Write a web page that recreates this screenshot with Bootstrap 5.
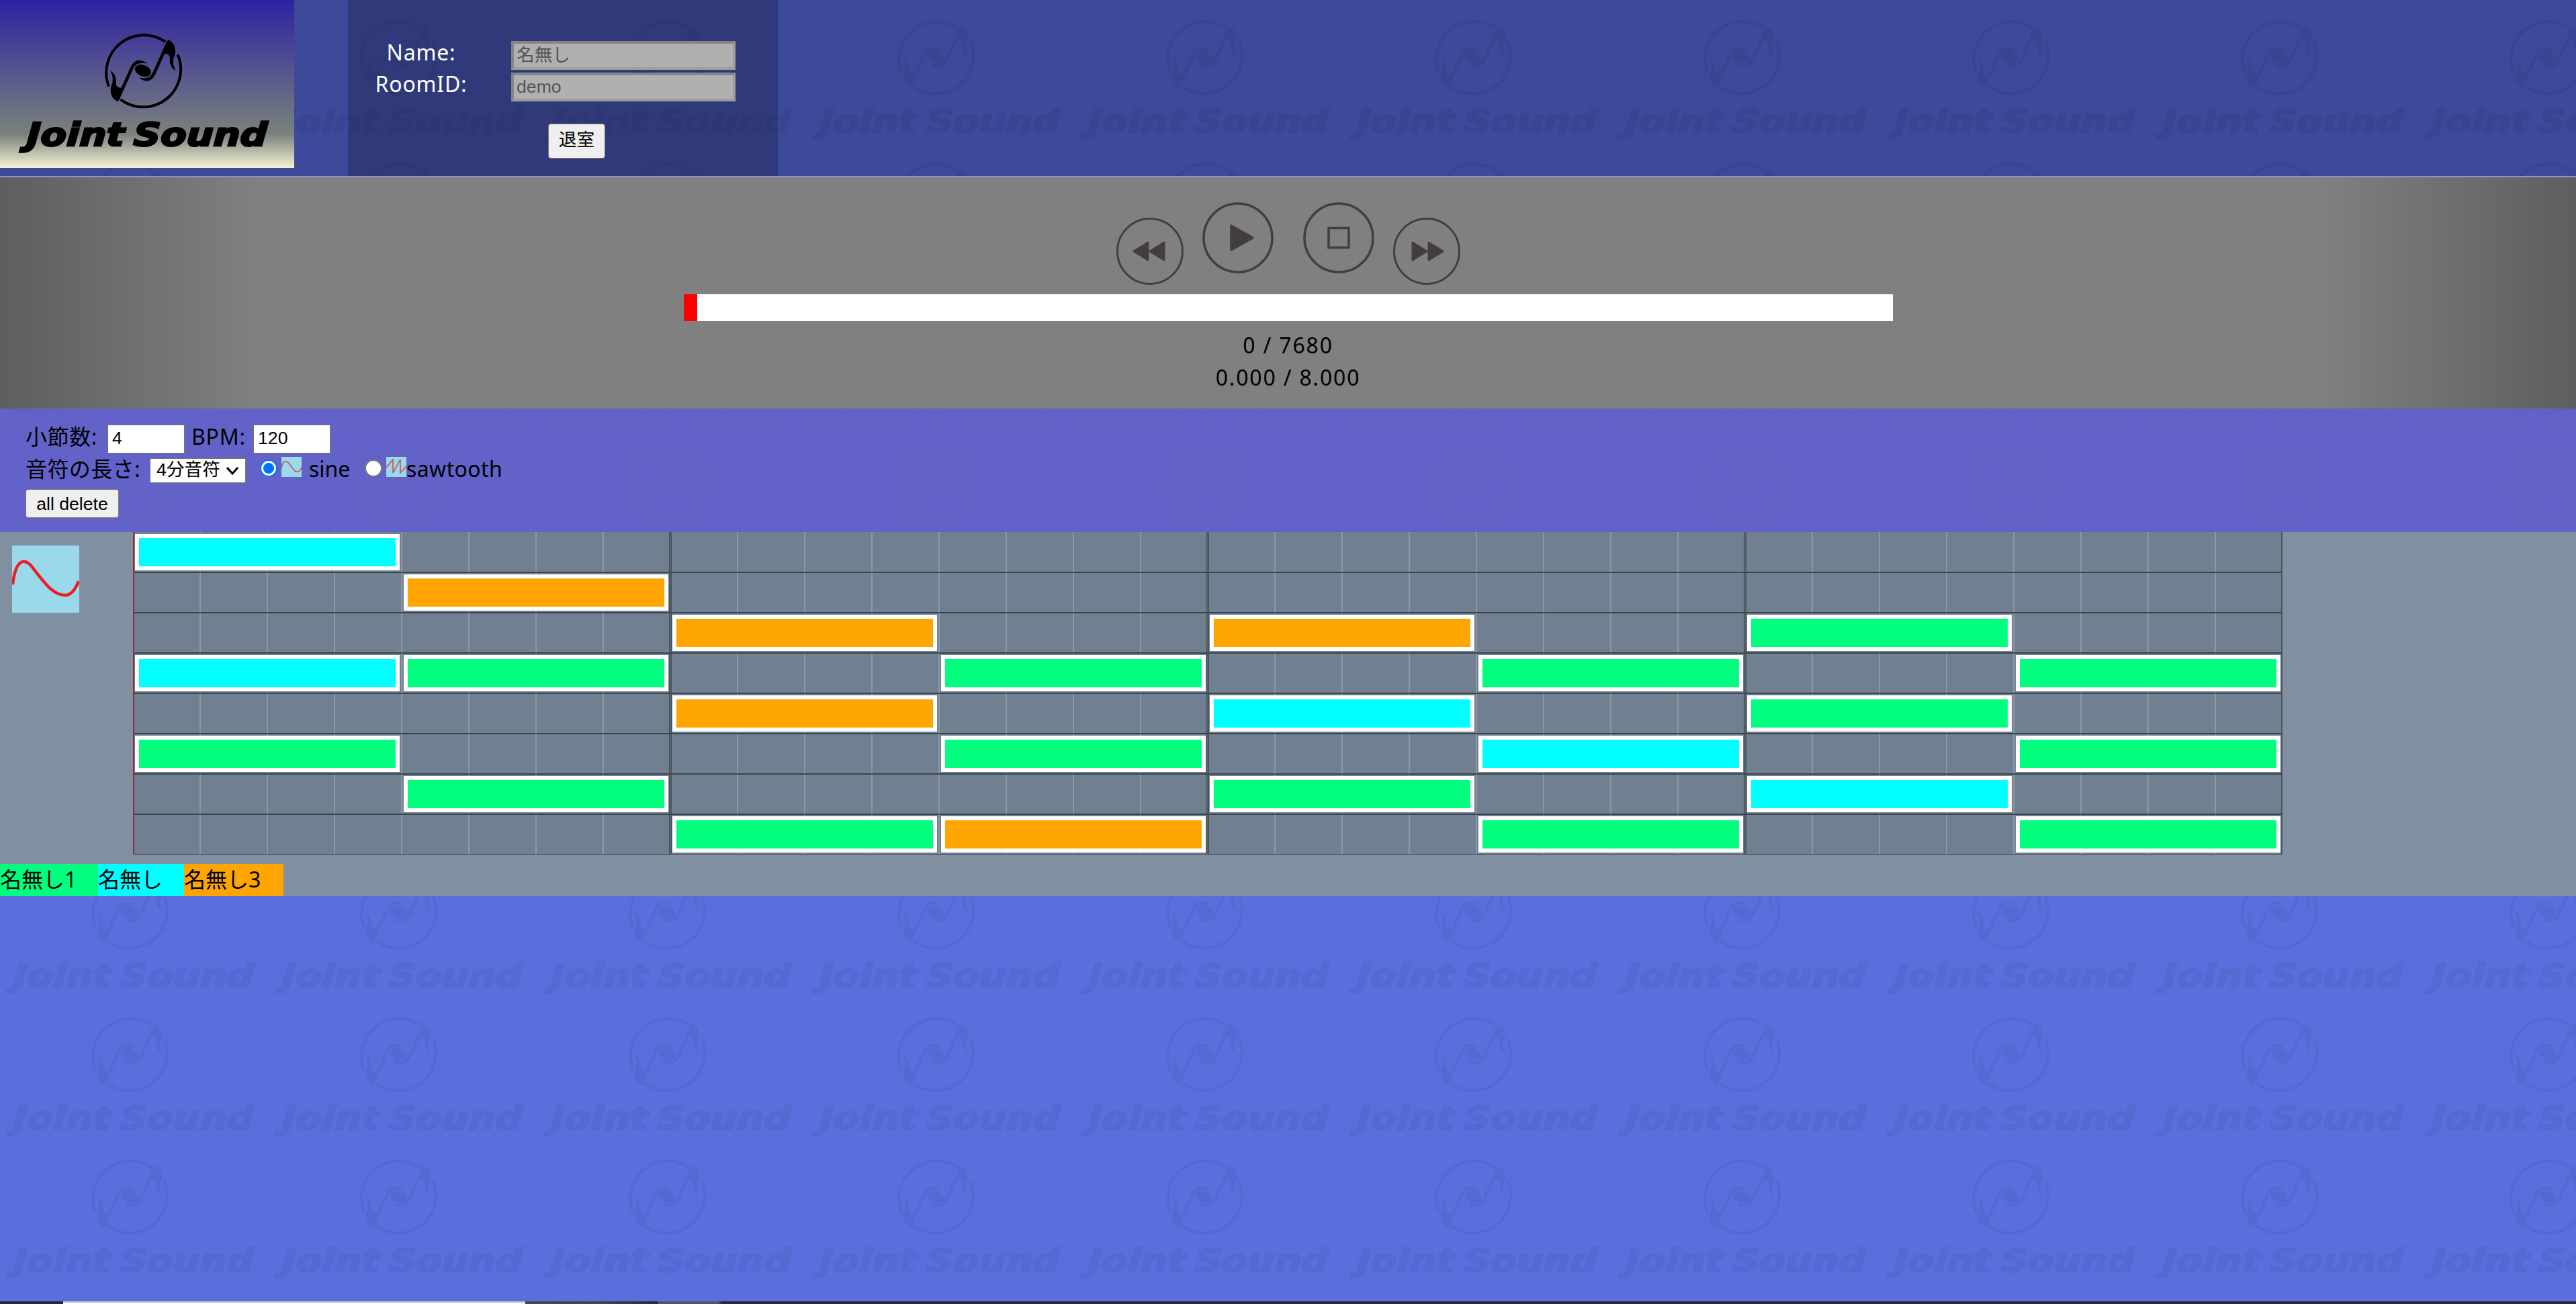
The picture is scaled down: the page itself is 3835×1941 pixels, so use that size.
<!DOCTYPE html>
<html lang="ja">
<head>
<meta charset="utf-8">
<title>Joint Sound</title>
<link href="https://cdn.jsdelivr.net/npm/bootstrap@5.3.0/dist/css/bootstrap.min.css" rel="stylesheet">
<style>
  body { font: 32px/48px "Noto Sans", "Noto Sans CJK JP", sans-serif; color: #000; background-color: #5b6edd; height: 1941px; overflow: hidden;
    background-image: url("data:image/svg+xml,%3Csvg xmlns='http://www.w3.org/2000/svg' width='400' height='212' opacity='.05'%3E%3Cg transform='translate(129.500 19.500) scale(.33333)'%3E%3Cg fill='none' stroke='%23000' stroke-width='13'%3E%3Cpath d='M38 268A168 168 0 0 1 290 68M345 125A168 168 0 0 1 90 326'/%3E%3Cpath d='M76 328L138 190Q152 158 174 158Q192 156 206 166'/%3E%3Cpath d='M304 66L242 204Q228 236 206 236Q188 238 174 228'/%3E%3C/g%3E%3Cellipse cx='190' cy='197' rx='39' ry='26' transform='rotate(20 190 197)'/%3E%3Cpath d='M44 198Q74 212 70 258Q76 276 94 272L78 336Q46 320 45 284Q46 266 54 250Q58 222 44 198Z'/%3E%3Cpath transform='rotate(180 190 197)' d='M44 198Q74 212 70 258Q76 276 94 272L78 336Q46 320 45 284Q46 266 54 250Q58 222 44 198Z'/%3E%3C/g%3E%3Ctext transform='translate(19 197) skewX(-3)' font-family='DejaVu Sans' font-weight='bold' font-style='oblique' font-size='48' word-spacing='-5' textLength='358' lengthAdjust='spacingAndGlyphs' stroke='%23000' stroke-width='2.500'%3EJoint Sound%3C/text%3E%3C/svg%3E"); }
  .site-head { height: 264px; background: rgba(0,0,15,.33); border-bottom: 2px solid #9690bf; gap: 80px; }
  .brand-box { width: 438px; height: 250px; padding: 20px 18px 18px 20px; background: linear-gradient(#2e22a2, #7a827c 80%, #f5f1d4); }
  .login-box { width: 640px; padding: 54px 63px 0 0; background: rgba(0,0,0,.2); color: #fff; }
  .login-label { width: 218px; text-align: center; margin-right: 25px; letter-spacing: .8px; }
  .login-row { height: 47px; }
  .f-sm { font: 26.67px/30px "Liberation Sans", "Noto Sans CJK JP", sans-serif; }
  .login-field { width: 334px; height: 43px; margin-top: 7px; padding: 2px 4px; border: 4px solid; border-color: #858585 #9d9d9d #9d9d9d #858585; background: #b0b0b0; color: #545454; }
  .plain-btn { background: #efefef; color: #000; border: 1.5px solid #767676; border-radius: 4px; padding: 0; text-align: center; }
  .leave { width: 85px; height: 52px; margin: 36px 0 0 298px; padding-bottom: 4px; }
  .player { height: 344px; background: linear-gradient(90deg, #5e5e5e, #808080 10%, #808080 90%, #5e5e5e); }
  .transport { height: 174px; padding-top: 37px; }
  .skip-icon { margin-top: 23px; }
  .near { margin-right: 28px; }
  .mid { margin-right: 44px; }
  .bar { width: 1800px; height: 40px; margin-bottom: 12px; background: #fff; }
  .bar-pos { width: 20px; background: #f00; }
  .count { letter-spacing: 1.8px; }
  .controls { height: 184px; padding: 18px 38px; background: rgba(100,96,196,.85); }
  .line { height: 48px; }
  .num { width: 115px; height: 43px; margin: 6px 0 0 0; padding: 4px 6px; background: #fff; border: 1.5px solid #767676; }
  .pick { width: 143px; height: 37px; margin: 8px 21px 0 14px; padding: 2px 9px; line-height: 28px; background: #fff; border: 1.5px solid #767676; }
  .dot { width: 26px; height: 26px; margin-top: 10px; border-radius: 50%; background: #fff; border: 2px solid #767676; }
  .dot.on { border-color: #0075ff; background: radial-gradient(circle, #0075ff 7.5px, #fff 8.5px); }
  .wipe { width: 139px; height: 43px; margin-top: 6px; line-height: 38px; }
  .bars-label { width: 122px; letter-spacing: .6px; }
  .len-label { width: 171px; letter-spacing: .4px; white-space: nowrap; }
  .bpm { width: 102px; padding-left: 10px; letter-spacing: .8px; }
  .wave { margin: 6px 0 0 6px; }
  .sine { width: 94px; padding-left: 11px; }
  .saw { letter-spacing: .4px; }
  .roll { background: #8190a0; height: 542px; }
  .roll-side { width: 198px; padding: 20px 0 0 18px; }
  .sheet { width: 3200px; height: 480px; position: relative; background: #708090; }
  .track { height: 60px; display: grid; grid-template-columns: repeat(8, 400px); }
  .note { height: 54px; margin: 3px; border: 6px solid #fff; z-index: 1; }
  .rules { position: absolute; inset: 0 auto auto 0; }
  .g { background: #00ff7f; } .c { background: #0ff; } .o { background: orange; }
  .c1 { grid-column: 1 } .c2 { grid-column: 2 } .c3 { grid-column: 3 } .c4 { grid-column: 4 }
  .c5 { grid-column: 5 } .c6 { grid-column: 6 } .c7 { grid-column: 7 } .c8 { grid-column: 8 }
  .people { margin-top: 14px; height: 48px; line-height: 45px; }
  .strip { height: 4px; background: linear-gradient(90deg, #2a2a36 94px, #fff 94px, #fff 782px, #484848 782px, #444 900px, #262c3a 980px, #555766 980px, #555766 1068px, #272c38 1076px); }
  .strip-top { width: 688px; height: 2px; margin-left: 94px; background: #c2c2c6; }
</style>
<script src="https://cdn.jsdelivr.net/npm/bootstrap@5.3.0/dist/js/bootstrap.bundle.min.js"></script>
</head>
<body class="d-flex flex-column">
<header class="site-head d-flex flex-shrink-0">
  <div class="brand-box">
    <svg class="d-block" width="400" height="212">
      <g transform="translate(129.500 19.500) scale(.33333)">
        <g fill="none" stroke="#000" stroke-width="12">
          <path d="M38 268A168 168 0 0 1 290 68M345 125A168 168 0 0 1 90 326"/>
          <path stroke-width="14" d="M76 328L138 190Q152 158 174 158M304 66L242 204Q228 236 206 236"/>
        </g>
        <ellipse cx="190" cy="197" rx="37" ry="25" transform="rotate(22 190 197)"/>
        <path id="flag" d="M44 198Q74 212 70 258Q76 276 94 272L78 336Q46 320 45 284Q46 266 54 250Q58 222 44 198ZM165 151Q192 150 208 166Q188 160 170 165Z"/>
        <use href="#flag" transform="rotate(180 190 197)"/>
      </g>
      <text transform="translate(19 197) skewX(-3)" font-family="DejaVu Sans" font-weight="bold" font-style="oblique" font-size="48" word-spacing="-5" textLength="358" lengthAdjust="spacingAndGlyphs" stroke="#000" stroke-width="2.500">Joint Sound</text>
    </svg>
  </div>
  <div class="login-box">
    <div class="login-row d-flex"><span class="login-label">Name:</span><div class="login-field f-sm">名無し</div></div>
    <div class="login-row d-flex"><span class="login-label">RoomID:</span><div class="login-field f-sm">demo</div></div>
    <button class="plain-btn leave f-sm d-block">退室</button>
  </div>
</header>

<section class="player flex-shrink-0 d-flex flex-column align-items-center">
  <div class="transport d-flex">
    <svg class="skip-icon near" width="100" height="100" fill="none" stroke="#433e3d" stroke-width="3"><circle cx="50" cy="50" r="48.5"/><path d="M26 50L47 37V63ZM50 50L71 37V63Z" fill="#433e3d" stroke-linejoin="round"/></svg>
    <svg class="mid" width="106" height="106" fill="none" stroke="#433e3d" stroke-width="3.500"><circle cx="53" cy="53" r="51"/><path d="M43 35L75 53L43 71Z" fill="#433e3d" stroke-linejoin="round"/></svg>
    <svg class="near" width="106" height="106" fill="none" stroke="#433e3d" stroke-width="3.500"><circle cx="53" cy="53" r="51"/><rect x="38" y="38.500" width="30" height="29"/></svg>
    <svg class="skip-icon" width="100" height="100" fill="none" stroke="#433e3d" stroke-width="3"><circle cx="50" cy="50" r="48.5"/><path d="M74 50L53 37V63ZM50 50L29 37V63Z" fill="#433e3d" stroke-linejoin="round"/></svg>
  </div>
  <div class="bar d-flex"><div class="bar-pos"></div></div>
  <div class="count">0 / 7680</div>
  <div class="count">0.000 / 8.000</div>
</section>

<section class="controls flex-shrink-0">
  <div class="line d-flex"><span class="bars-label">小節数:</span><div class="num f-sm">4</div><span class="bpm">BPM:</span><div class="num f-sm">120</div></div>
  <div class="line d-flex"><span class="len-label">音符の長さ:</span>
    <div class="pick f-sm d-flex justify-content-between">4分音符<svg width="20" height="30" fill="none" stroke="#000" stroke-width="3"><path d="M2 11L10 20L18 11"/></svg></div>
    <span class="dot on"></span>
    <svg class="wave" width="30" height="30"><rect width="30" height="30" fill="#9ad9ea"/><path d="M0 17C2 4 8 5 12 11C17 17 20 24 25 22Q28 21 30 16" fill="none" stroke="#d8404c" stroke-width="1.5"/></svg>
    <span class="sine">sine</span><span class="dot"></span>
    <svg class="wave" width="30" height="30"><rect width="30" height="30" fill="#9ad9ea"/><path d="M0 16L10 4V24L21 4V24L30 14" fill="none" stroke="#d8404c" stroke-width="1.5"/></svg>
    <span class="saw">sawtooth</span>
  </div>
  <button class="plain-btn wipe f-sm d-block">all delete</button>
</section>

<section class="roll flex-shrink-0">
  <div class="d-flex">
    <div class="roll-side"><svg class="d-block" width="100" height="100"><rect width="100" height="100" fill="#9ad9ea"/><path d="M1 58C5 22 18 14 33 36C50 58 62 74 79 74Q91 74 99 53" fill="none" stroke="#ed1c24" stroke-width="4.500"/></svg></div>
    <div class="sheet">
      <svg class="rules" width="3200" height="480">
        <defs>
          <pattern id="cells" width="100" height="60" patternUnits="userSpaceOnUse"><path d="M.500 0V60M99.500 0V60" stroke="#8b98a7"/></pattern>
          <pattern id="rows" width="100" height="60" patternUnits="userSpaceOnUse"><path d="M0 .500H100M0 59.500H100" stroke="#3a464e"/></pattern>
        </defs>
        <rect width="3200" height="480" fill="url(#cells)"/>
        <path d="M800 0V480M1600 0V480M2400 0V480" stroke="#444e56" stroke-width="4"/>
        <path d="M800 0V480M1600 0V480M2400 0V480" stroke="#59626a" stroke-width="2"/>
        <path d="M3199 0V480" stroke="#4b555d" stroke-width="2"/>
        <rect y="1" width="3200" height="479" fill="url(#rows)"/>
        <path d="M1 0V480" stroke="#8d303c" stroke-width="2"/>
      </svg>
      <div class="track"><div class="note c c1"></div></div>
      <div class="track"><div class="note o c2"></div></div>
      <div class="track"><div class="note o c3"></div><div class="note o c5"></div><div class="note g c7"></div></div>
      <div class="track"><div class="note c c1"></div><div class="note g c2"></div><div class="note g c4"></div><div class="note g c6"></div><div class="note g c8"></div></div>
      <div class="track"><div class="note o c3"></div><div class="note c c5"></div><div class="note g c7"></div></div>
      <div class="track"><div class="note g c1"></div><div class="note g c4"></div><div class="note c c6"></div><div class="note g c8"></div></div>
      <div class="track"><div class="note g c2"></div><div class="note g c5"></div><div class="note c c7"></div></div>
      <div class="track"><div class="note g c3"></div><div class="note o c4"></div><div class="note g c6"></div><div class="note g c8"></div></div>
    </div>
  </div>
  <div class="people d-flex"><div class="g" style="width:146px">名無し1</div><div class="c" style="width:128px">名無し</div><div class="o" style="width:148px">名無し3</div></div>
</section>
<footer class="strip mt-auto"><div class="strip-top"></div></footer>
</body>
</html>
